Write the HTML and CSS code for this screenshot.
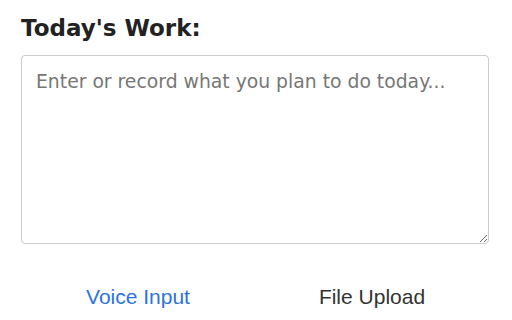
FILE: index.html
```html
<!DOCTYPE html>
<html>
<head>
<meta charset="utf-8">
<link rel="stylesheet" href="styles.css">
</head>
<body>
<div class="panel">
  <h2 class="title">Today's Work:</h2>
  <textarea class="entry" placeholder="Enter or record what you plan to do today..."></textarea>
  <div class="actions">
    <button class="action voice">Voice Input</button>
    <button class="action upload">File Upload</button>
  </div>
</div>
</body>
</html>
```
FILE: styles.css
```css
html, body {
  margin: 0;
  padding: 0;
  background: #ffffff;
}
.panel {
  padding: 14px 23px 0 21px;
  display: flex;
  flex-direction: column;
}
.title {
  margin: 0;
  font-family: "DejaVu Sans", Verdana, sans-serif;
  font-weight: bold;
  font-size: 23px;
  line-height: 28px;
  color: #222222;
}
.entry {
  margin-top: 13px;
  box-sizing: border-box;
  width: 100%;
  height: 189px;
  border: 1px solid #cccccc;
  border-radius: 4px;
  padding: 13px 14px;
  font-family: "DejaVu Sans", Verdana, sans-serif;
  font-size: 18.8px;
  line-height: 26px;
  color: #333333;
  resize: vertical;
  outline: none;
}
.entry::placeholder {
  color: #777777;
}
.actions {
  display: flex;
  margin-top: 40px;
}
.action {
  flex: 1;
  background: none;
  border: none;
  padding: 0;
  font-family: "Liberation Sans", Arial, sans-serif;
  font-size: 21px;
  line-height: 26px;
  cursor: pointer;
}
.voice { color: #2b73e0; }
.upload { color: #333333; }
```
